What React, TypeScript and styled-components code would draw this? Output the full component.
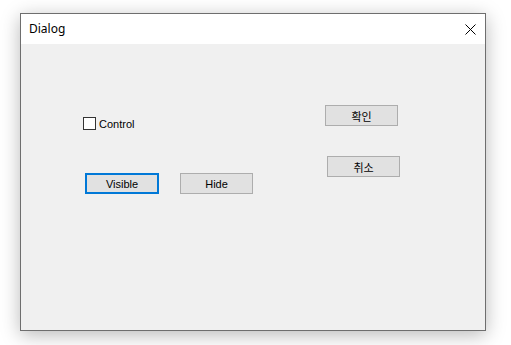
import React from 'react';
import styled, { createGlobalStyle } from 'styled-components';

const GlobalStyle = createGlobalStyle`
  html, body {
    margin: 0;
    padding: 0;
    background: #ffffff;
  }
`;

const Page = styled.div`
  width: 511px;
  height: 345px;
  padding: 13px 0 0 20px;
  box-sizing: border-box;
`;

const Window = styled.div`
  width: 466px;
  height: 318px;
  box-sizing: border-box;
  border: 1px solid #6e6e6e;
  background: #f0f0f0;
  box-shadow: 0 4px 18px rgba(0, 0, 0, 0.28);
  display: flex;
  flex-direction: column;
`;

const TitleBar = styled.div`
  height: 30px;
  background: #ffffff;
  display: flex;
  align-items: center;
  justify-content: space-between;
  padding: 0 9px 0 8px;
  flex-shrink: 0;
`;

const Title = styled.span`
  font-family: "Noto Sans", "Segoe UI", sans-serif;
  font-size: 12px;
  color: #000000;
  margin-top: -1px;
`;

const CloseIcon = styled.svg`
  width: 11px;
  height: 11px;
  display: block;
`;

const Content = styled.div`
  flex: 1;
  display: flex;
`;

const LeftColumn = styled.div`
  width: 304px;
  padding: 73px 0 0 62px;
  box-sizing: border-box;
  display: flex;
  flex-direction: column;
`;

const RightColumn = styled.div`
  padding-top: 61px;
  display: flex;
  flex-direction: column;
  align-items: flex-start;
`;

const CheckRow = styled.label`
  display: flex;
  align-items: center;
  gap: 3px;
  height: 13px;
  font-family: "Liberation Sans", Arial, sans-serif;
  font-size: 11px;
  color: #000000;
`;

const CheckBox = styled.span`
  width: 13px;
  height: 13px;
  box-sizing: border-box;
  border: 1px solid #333333;
  background: #ffffff;
  display: inline-block;
`;

const ButtonRow = styled.div`
  display: flex;
  gap: 21px;
  margin: 43px 0 0 2px;
`;

const Button = styled.button<{ $focused?: boolean; $offset?: number; $top?: number }>`
  width: ${p => (p.$focused ? 74 : 73)}px;
  height: 21px;
  box-sizing: border-box;
  margin: ${p => p.$top || 0}px 0 0 ${p => p.$offset || 0}px;
  padding: 0;
  background: #e1e1e1;
  border: ${p => (p.$focused ? '2px solid #0078d7' : '1px solid #adadad')};
  font-family: "Liberation Sans", Arial, "Noto Sans CJK KR", sans-serif;
  font-size: 11px;
  color: #000000;
  display: flex;
  align-items: center;
  justify-content: center;
`;

const App: React.FC = () => {
  return (
    <>
      <GlobalStyle />
      <Page>
        <Window>
          <TitleBar>
            <Title>Dialog</Title>
            <CloseIcon viewBox="0 0 11 11">
              <path d="M0.5 0.5 L10.5 10.5 M10.5 0.5 L0.5 10.5" stroke="#000" strokeWidth="1" fill="none" />
            </CloseIcon>
          </TitleBar>
          <Content>
            <LeftColumn>
              <CheckRow>
                <CheckBox />
                Control
              </CheckRow>
              <ButtonRow>
                <Button $focused>Visible</Button>
                <Button>Hide</Button>
              </ButtonRow>
            </LeftColumn>
            <RightColumn>
              <Button>확인</Button>
              <Button $offset={2} $top={30}>취소</Button>
            </RightColumn>
          </Content>
        </Window>
      </Page>
    </>
  );
};

export default App;
